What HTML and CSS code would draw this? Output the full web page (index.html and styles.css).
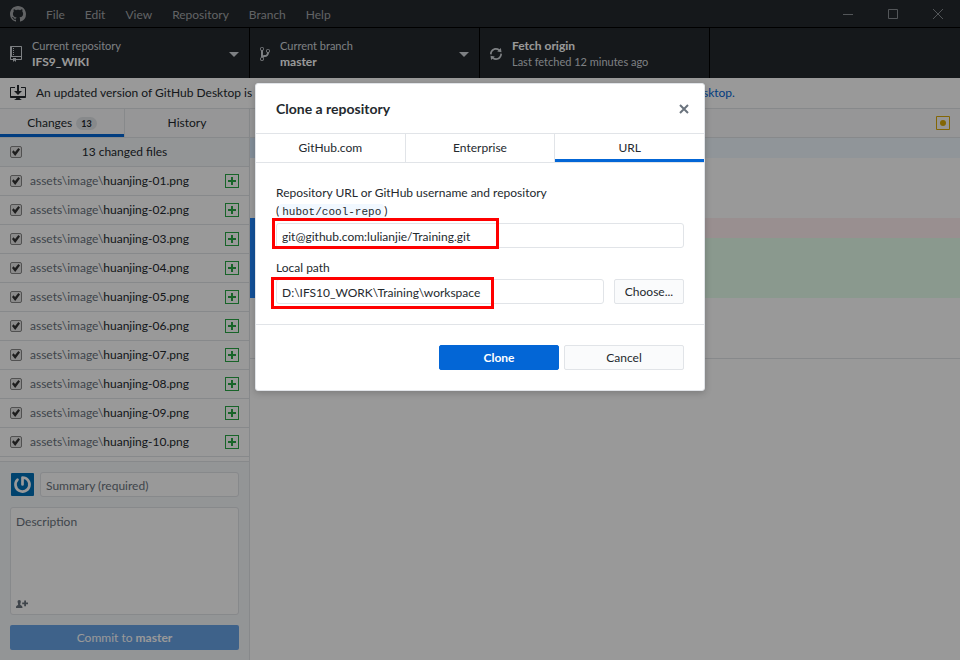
FILE: index.html
```html
<!DOCTYPE html>
<html lang="en">
<head>
<meta charset="utf-8">
<title>GitHub Desktop</title>
<link rel="stylesheet" href="styles.css">
</head>
<body>
<svg class="sprites" aria-hidden="true">
  <symbol id="added" viewBox="0 0 14 14"><path fill="currentColor" fill-rule="evenodd" d="M0 0h14v14H0zM1 1v12h12V1zM6 3h2v3h3v2H8v3H6V8H3V6h3z"/></symbol>
</svg>
<div class="app">
  <header class="titlebar">
    <svg class="mark" viewBox="0 0 16 16" aria-hidden="true"><path fill="currentColor" d="M8 0C3.58 0 0 3.58 0 8c0 3.54 2.29 6.53 5.47 7.59.4.07.55-.17.55-.38 0-.19-.01-.82-.01-1.49-2.01.37-2.53-.49-2.69-.94-.09-.23-.48-.94-.82-1.13-.28-.15-.68-.52-.01-.53.63-.01 1.08.58 1.23.82.72 1.21 1.87.87 2.33.66.07-.52.28-.87.51-1.07-1.78-.2-3.64-.89-3.64-3.95 0-.87.31-1.59.82-2.15-.08-.2-.36-1.02.08-2.12 0 0 .67-.21 2.2.82.64-.18 1.32-.27 2-.27s1.36.09 2 .27c1.53-1.04 2.2-.82 2.2-.82.44 1.1.16 1.92.08 2.12.51.56.82 1.27.82 2.15 0 3.07-1.87 3.75-3.65 3.95.29.25.54.73.54 1.48 0 1.07-.01 1.93-.01 2.2 0 .21.15.46.55.38A8.01 8.01 0 0 0 16 8c0-4.42-3.58-8-8-8z"/></svg>
    <nav class="menu">
      <button>File</button><button>Edit</button><button>View</button><button>Repository</button><button>Branch</button><button>Help</button>
    </nav>
    <div class="window-controls">
      <button aria-label="Minimize"><svg viewBox="0 0 10 10"><path d="M0 5.5h10"/></svg></button>
      <button aria-label="Maximize"><svg viewBox="0 0 10 10"><path d="M.5.5h9v9h-9z"/></svg></button>
      <button aria-label="Close window"><svg viewBox="0 0 10 10"><path d="M0 0l10 10M10 0L0 10"/></svg></button>
    </div>
  </header>

  <div class="toolbar">
    <button class="tool tool-repo">
      <svg class="tool-icon" viewBox="0 0 12 16" aria-hidden="true"><path fill="currentColor" fill-rule="evenodd" d="M4 9H3V8h1v1zm0-3H3v1h1V6zm0-2H3v1h1V4zm0-2H3v1h1V2zm8-1v12c0 .55-.45 1-1 1H6v2l-1.500-1.500L3 16v-2H1c-.55 0-1-.45-1-1V1c0-.55.45-1 1-1h10c.55 0 1 .45 1 1zm-1 10H1v2h2v-1h3v1h5v-2zm0-10H2v9h9V1z"/></svg>
      <span class="tool-text"><span>Current repository</span><strong>IFS9_WIKI</strong></span>
      <span class="caret"></span>
    </button>
    <button class="tool tool-branch">
      <svg class="tool-icon" viewBox="0 0 10 16" aria-hidden="true"><path fill="currentColor" fill-rule="evenodd" d="M10 5c0-1.110-.89-2-2-2a1.993 1.993 0 0 0-1 3.720v.3c-.02.520-.23.980-.63 1.380-.4.400-.86.610-1.380.630-.83.020-1.480.160-2 .450V4.720a1.993 1.993 0 0 0-1-3.720C.88 1 0 1.890 0 3a2 2 0 0 0 1 1.720v6.560c-.59.350-1 .990-1 1.720 0 1.110.89 2 2 2 1.110 0 2-.89 2-2 0-.53-.2-1-.53-1.360.09-.06.480-.41.590-.47.250-.11.560-.17.940-.17 1.050-.05 1.950-.45 2.750-1.250S8.950 7.770 9 6.730h-.02C9.590 6.370 10 5.730 10 5zM2 1.800c.66 0 1.200.55 1.200 1.200 0 .65-.55 1.200-1.200 1.200C1.350 4.200.8 3.650.8 3c0-.65.55-1.200 1.200-1.200zm0 12.410c-.66 0-1.200-.55-1.200-1.200 0-.65.55-1.200 1.200-1.200.65 0 1.200.55 1.200 1.200 0 .65-.55 1.200-1.200 1.200zm6-8c-.66 0-1.200-.55-1.200-1.200 0-.65.55-1.200 1.200-1.200.65 0 1.200.55 1.200 1.200 0 .65-.55 1.200-1.200 1.200z"/></svg>
      <span class="tool-text"><span>Current branch</span><strong>master</strong></span>
      <span class="caret"></span>
    </button>
    <button class="tool">
      <svg class="tool-icon" viewBox="0 0 12 16" aria-hidden="true"><path fill="currentColor" fill-rule="evenodd" d="M10.240 7.400a4.150 4.150 0 0 1-1.200 3.600 4.346 4.346 0 0 1-5.410.540L4.800 10.400.5 9.800l.6 4.200 1.310-1.260c2.360 1.740 5.700 1.570 7.840-.54a5.876 5.876 0 0 0 1.740-4.460l-1.750-.34zM2.960 5a4.346 4.346 0 0 1 5.410-.54L7.200 5.600l4.300.6-.6-4.200-1.310 1.260c-2.360-1.740-5.700-1.570-7.850.54C.5 5.030-.06 6.650.01 8.260l1.750.35A4.170 4.170 0 0 1 2.960 5z"/></svg>
      <span class="tool-text"><strong>Fetch origin</strong><span>Last fetched 12 minutes ago</span></span>
    </button>
  </div>

  <div class="banner">
    <svg viewBox="0 0 16 16" aria-hidden="true"><path fill="currentColor" fill-rule="evenodd" d="M4 6h3V0h2v6h3l-4 4-4-4zm11-4h-4v1h4v8H1V3h4V2H1c-.55 0-1 .45-1 1v9c0 .55.45 1 1 1h5.340c-.25.610-.86 1.390-2.340 2h8c-1.480-.61-2.090-1.390-2.340-2H15c.55 0 1-.45 1-1V3c0-.55-.45-1-1-1z"/></svg>
    <p>An updated version of GitHub Desktop is available and will be installed at the next launch. See <a href="#">what's new</a> or <a href="#">restart GitHub Desktop.</a></p>
  </div>

  <div class="workspace">
    <aside class="sidebar">
      <div class="side-tabs">
        <button class="active">Changes <span class="count">13</span></button>
        <button>History</button>
      </div>
      <div class="list-head"><input type="checkbox" id="all" checked><label for="all">13 changed files</label></div>
      <ul class="files">
        <li><input type="checkbox" id="f1" checked><label for="f1">assets\image\<b>huanjing-01.png</b></label><svg><use href="#added"/></svg></li>
        <li><input type="checkbox" id="f2" checked><label for="f2">assets\image\<b>huanjing-02.png</b></label><svg><use href="#added"/></svg></li>
        <li><input type="checkbox" id="f3" checked><label for="f3">assets\image\<b>huanjing-03.png</b></label><svg><use href="#added"/></svg></li>
        <li><input type="checkbox" id="f4" checked><label for="f4">assets\image\<b>huanjing-04.png</b></label><svg><use href="#added"/></svg></li>
        <li><input type="checkbox" id="f5" checked><label for="f5">assets\image\<b>huanjing-05.png</b></label><svg><use href="#added"/></svg></li>
        <li><input type="checkbox" id="f6" checked><label for="f6">assets\image\<b>huanjing-06.png</b></label><svg><use href="#added"/></svg></li>
        <li><input type="checkbox" id="f7" checked><label for="f7">assets\image\<b>huanjing-07.png</b></label><svg><use href="#added"/></svg></li>
        <li><input type="checkbox" id="f8" checked><label for="f8">assets\image\<b>huanjing-08.png</b></label><svg><use href="#added"/></svg></li>
        <li><input type="checkbox" id="f9" checked><label for="f9">assets\image\<b>huanjing-09.png</b></label><svg><use href="#added"/></svg></li>
        <li><input type="checkbox" id="f10" checked><label for="f10">assets\image\<b>huanjing-10.png</b></label><svg><use href="#added"/></svg></li>
      </ul>
      <form class="commit">
        <div class="summary">
          <svg class="avatar" viewBox="0 0 25 25" aria-hidden="true"><rect x="1" y="1" width="23" height="23" rx="1" fill="#0071b8"/><path d="M12.500 12.500V5.500A7 7 0 1 1 7.500 7.600" fill="none" stroke="#fff" stroke-width="2.700" stroke-linejoin="round" stroke-linecap="round"/></svg>
          <input type="text" placeholder="Summary (required)" aria-label="Summary">
        </div>
        <div class="description">
          <textarea placeholder="Description" aria-label="Description"></textarea>
          <button type="button" class="coauthor" aria-label="Add co-authors"><svg viewBox="0 0 12 9"><path fill="currentColor" d="M3.200 0C4.400 0 4.900.9 4.800 2.100 4.700 3 4.300 3.600 4.200 4.200 4.200 5.200 6.400 5.400 6.400 6.900V8H0V6.900C0 5.400 2.200 5.200 2.200 4.200 2.100 3.600 1.700 3 1.600 2.100 1.500.9 2 0 3.200 0zM8.200.5H10v2h2v1.700h-2v2H8.200v-2h-2V2.500h2z"/></svg></button>
        </div>
        <button type="button" class="commit-button">Commit to <strong>master</strong></button>
      </form>
    </aside>
    <main class="diff">
      <div class="diff-head"><svg viewBox="0 0 14 14" aria-label="Modified"><path fill="none" stroke="currentColor" d="M.5.5h13v13H.5z"/><circle cx="7" cy="7" r="3" fill="currentColor"/></svg></div>
      <div class="line hunk"></div>
      <div class="line"></div><div class="line"></div><div class="line"></div>
      <div class="line removed"></div>
      <div class="line added"></div><div class="line added"></div><div class="line added"></div>
      <div class="line"></div><div class="line"></div><div class="line"></div>
      <div class="diff-end"></div>
    </main>
  </div>
</div>

<div class="overlay">
  <form class="dialog" role="dialog" aria-labelledby="dialog-title">
    <header class="dialog-head">
      <h1 id="dialog-title">Clone a repository</h1>
      <button type="button" class="close" aria-label="Close"><svg viewBox="0 0 10 10"><path d="M1 1l8 8M9 1L1 9" fill="none" stroke="currentColor" stroke-width="2"/></svg></button>
    </header>
    <nav class="dialog-tabs">
      <button type="button">GitHub.com</button><button type="button">Enterprise</button><button type="button" class="active">URL</button>
    </nav>
    <div class="dialog-body">
      <label for="url">Repository URL or GitHub username and repository<br>(<code>hubot/cool-repo</code>)</label>
      <div class="field">
        <input type="text" id="url" value="git@github.com:lulianjie/Training.git">
        <span class="highlight highlight-url"></span>
      </div>
      <label for="path">Local path</label>
      <div class="field">
        <input type="text" id="path" value="D:\IFS10_WORK\Training\workspace">
        <button type="button" class="choose">Choose...</button>
        <span class="highlight highlight-path"></span>
      </div>
    </div>
    <footer class="dialog-foot">
      <button type="button" class="primary">Clone</button>
      <button type="button">Cancel</button>
    </footer>
  </form>
</div>
</body>
</html>
```
FILE: styles.css
```css
* { box-sizing: border-box; }

body {
  margin: 0;
  font: 12px/18px Lato, "Open Sans", sans-serif;
  color: #24292e;
  background: #fff;
}

button, input, textarea { font: inherit; color: inherit; margin: 0; }
button { border: 0; padding: 0; background: none; }
svg { display: block; flex: none; }
.sprites { display: none; }

.app { display: flex; flex-direction: column; min-height: 100vh; }

/* Title bar */
.titlebar {
  display: flex;
  align-items: center;
  height: 28px;
  padding-left: 10px;
  background: #24292e;
  border-bottom: 1px solid #000;
  color: #a3a6a9;
}
.mark { width: 16px; height: 16px; }
.menu { display: flex; margin-left: 10px; }
.menu button { padding: 2px 10px 0; }
.window-controls { display: flex; margin-left: auto; }
.window-controls button { width: 45px; display: flex; justify-content: center; }
.window-controls svg { width: 10px; height: 10px; fill: none; stroke: #8b9095; }

/* Toolbar */
.toolbar { display: flex; height: 50px; background: #24292e; }
.tool {
  display: flex;
  align-items: center;
  width: 230px;
  padding: 2px 10px 0;
  border-right: 1px solid #000;
  color: #d1d5da;
  text-align: left;
}
.tool-repo { width: 250px; }
.tool-icon { width: 12px; height: 16px; margin-right: 10px; }
.tool-branch .tool-icon { width: 10px; }
.tool-text { display: flex; flex-direction: column; flex: 1; font-size: 11px; line-height: 16px; }
.tool-text strong { color: #fff; font-size: 12px; font-weight: 700; }
.caret { border: 5px solid transparent; border-top-color: currentColor; border-bottom: 0; }

/* Update banner */
.banner {
  display: flex;
  align-items: center;
  gap: 10px;
  height: 31px;
  padding: 0 10px;
  border-bottom: 1px solid #e1e4e8;
}
.banner svg { width: 16px; height: 16px; }
.banner p { margin: 0; white-space: nowrap; }
a { color: #0366d6; text-decoration: none; }

.workspace { display: flex; flex: 1; }

/* Sidebar */
.sidebar {
  display: flex;
  flex-direction: column;
  width: 250px;
  border-right: 1px solid #e1e4e8;
}
.side-tabs { display: flex; height: 29px; border-bottom: 1px solid #e1e4e8; background: #fafbfc; }
.side-tabs button { flex: 1; display: flex; align-items: center; justify-content: center; gap: 4px; }
.side-tabs button + button { border-left: 1px solid #e1e4e8; }
.side-tabs .active { box-shadow: inset 0 -3px #0366d6; }
.count { padding: 0 5px; border-radius: 8px; background: #e1e4e8; font-size: 9px; line-height: 13px; font-weight: 700; }

.list-head, .files li {
  display: flex;
  align-items: center;
  height: 29px;
  padding: 0 10px;
  border-bottom: 1px solid #e1e4e8;
}
.list-head { background: #f6f8fa; }
.list-head label { flex: 1; text-align: center; padding-right: 12px; }
input[type="checkbox"] {
  appearance: none;
  display: grid;
  place-items: center;
  width: 12px;
  height: 12px;
  border: 1px solid #888;
  border-radius: 2px;
  background: #e6e6e6;
}
input[type="checkbox"]:checked::before {
  content: "";
  width: 8px;
  height: 8px;
  background: #333;
  clip-path: polygon(0 50%, 20% 28%, 38% 50%, 80% 0, 100% 20%, 40% 100%);
}
.files { margin: 0; padding: 0; list-style: none; }
.files label { flex: 1; margin-left: 8px; color: #6a737d; white-space: nowrap; }
.files b { font-weight: 400; color: #24292e; }
.files svg { width: 14px; height: 14px; color: #28a745; }

/* Commit form */
.commit {
  display: flex;
  flex-direction: column;
  flex: 1;
  gap: 10px;
  margin-top: 4px;
  padding: 10px;
  border-top: 1px solid #e1e4e8;
  background: #f6f8fa;
}
.summary { display: flex; align-items: center; gap: 5px; }
.avatar { width: 25px; height: 25px; }
input[type="text"], .description {
  border: 1px solid #e1e4e8;
  border-radius: 3px;
  background: #fff;
}
input[type="text"] { flex: 1; min-width: 0; height: 25px; padding: 2px 5px 0; }
::placeholder { color: #6a737d; opacity: 1; }
.description { display: flex; flex-direction: column; height: 108px; padding: 5px; }
textarea { flex: 1; width: 100%; padding: 0; border: 0; background: none; resize: none; }
.coauthor { align-self: flex-start; color: #6a737d; }
.coauthor svg { width: 12px; height: 9px; }
.commit-button { height: 25px; border-radius: 2px; background: #68a3e7; color: #fff; }
.commit-button strong { font-weight: 700; }

/* Diff */
.diff { flex: 1; }
.diff-head {
  display: flex;
  align-items: center;
  justify-content: flex-end;
  height: 29px;
  padding-right: 10px;
  border-bottom: 1px solid #e1e4e8;
  background: #fafbfc;
  color: #dbab09;
}
.diff-head svg { width: 14px; height: 14px; }
.line { height: 20px; border-left: 70px solid #fff; }
.hunk { background: #f1f8ff; border-left-color: #dbedff; }
.removed { background: #ffeef0; border-left-color: #2188ff; }
.added { background: #e6ffed; border-left-color: #2188ff; }
.diff-end { border-top: 1px solid #e1e4e8; }

/* Dialog */
.overlay {
  position: absolute;
  inset: 0;
  display: flex;
  justify-content: center;
  align-items: flex-start;
  padding-top: 83px;
  background: rgba(0, 0, 0, 0.4);
}
.dialog {
  width: 450px;
  border: 1px solid #e1e4e8;
  border-radius: 3px;
  background: #fff;
  box-shadow: 0 2px 7px rgba(0, 0, 0, 0.2);
}
.dialog-head {
  display: flex;
  align-items: center;
  justify-content: space-between;
  height: 50px;
  padding: 0 15px 0 20px;
  border-bottom: 1px solid #e1e4e8;
}
.dialog-head h1 { margin: 0; font-size: 14px; line-height: 20px; font-weight: 700; }
.close { color: #6a737d; }
.close svg { width: 10px; height: 10px; }
.dialog-tabs { display: flex; height: 29px; border-bottom: 1px solid #e1e4e8; }
.dialog-tabs button { flex: 1; }
.dialog-tabs button + button { border-left: 1px solid #e1e4e8; }
.dialog-tabs .active { box-shadow: inset 0 -3px #0366d6; }
.dialog-body { padding: 21px 20px 20px; }
.dialog-body label { display: block; margin-bottom: 2px; }
.field + label { margin-top: 11px; }
code { padding: 2px 3px; border-radius: 3px; background: #f1f8ff; font: 11px/18px "Liberation Mono", monospace; }
.field { position: relative; display: flex; gap: 10px; }
.choose, .dialog-foot button {
  height: 25px;
  border: 1px solid #e1e4e8;
  border-radius: 2px;
  background: #fafbfc;
}
.choose { width: 70px; }
.highlight { position: absolute; border: 3px solid #f00; pointer-events: none; }
.highlight-url { left: -4px; top: -5px; width: 227px; height: 31px; }
.highlight-path { left: -5px; top: -2px; width: 223px; height: 32px; }
.dialog-foot {
  display: flex;
  justify-content: flex-end;
  gap: 5px;
  padding: 20px;
  border-top: 1px solid #e1e4e8;
}
.dialog-foot button { width: 120px; }
.dialog-foot .primary { border-color: #0366d6; background: #0366d6; color: #fff; font-weight: 700; }
```
